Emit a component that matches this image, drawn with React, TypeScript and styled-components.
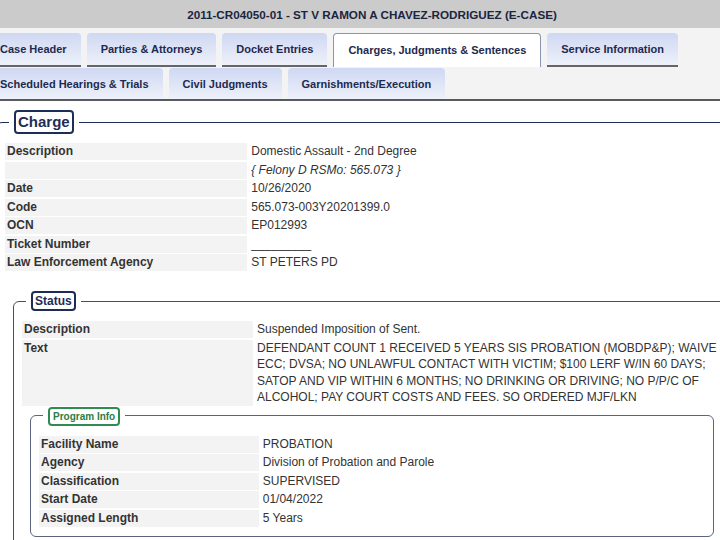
import React from "react";
import styled, { createGlobalStyle } from "styled-components";

const Global = createGlobalStyle`
  html, body { margin: 0; padding: 0; background: #ffffff; overflow: hidden; }
  body { font-family: "Liberation Sans", Arial, Helvetica, sans-serif; }
`;

const Page = styled.div`
  width: 772px;
  margin-left: -14px;
`;

const TitleBar = styled.div`
  height: 28px;
  background: #cbcbcb;
  display: flex;
  align-items: center;
  justify-content: center;
  font-weight: bold;
  font-size: 11.7px;
  color: #1c2540;
`;

const TabArea = styled.div`
  background: #f3f3f3;
  padding-top: 5px;
  border-bottom: 2px solid #5a5a5a;
  display: flex;
  flex-direction: column;
  gap: 1px;
`;

const TabRow = styled.div`
  display: flex;
  gap: 6px;
  align-items: flex-end;
`;

const Tab = styled.div<{ $active?: boolean; $row: number }>`
  box-sizing: border-box;
  height: ${(p) => (p.$row === 1 ? 34 : 31)}px;
  padding: 0 ${(p) => (p.$active ? 14 : 14)}px ${(p) => (p.$active ? 2 : 0)}px;
  display: flex;
  align-items: center;
  white-space: nowrap;
  font-size: 11px;
  font-weight: bold;
  color: #1d2a4e;
  border-radius: 4px 4px 0 0;
  background: ${(p) => (p.$active ? "#ffffff" : "linear-gradient(#cfd8f3, #eef1fa)")};
  border: ${(p) => (p.$active ? "1px solid #8796ae" : "none")};
  border-bottom: ${(p) => (p.$active ? "none" : p.$row === 1 ? "2px solid #666666" : "none")};
`;

const Content = styled.div`
  background: #ffffff;
  padding-bottom: 20px;
`;

const Fieldset = styled.fieldset<{ $level: number }>`
  min-width: 0;
  margin: ${(p) => (p.$level === 0 ? "9px 10px 0" : p.$level === 1 ? "20px 8px 0" : "0 8px 0")};
  padding: ${(p) => (p.$level === 0 ? "9px 8px 10px" : p.$level === 1 ? "10px 8px 10px" : "10px 8px 9px")};
  border: 1px solid ${(p) => (p.$level === 0 ? "#1e2d55" : p.$level === 1 ? "#434f70" : "#5a6480")};
  border-radius: 6px;
`;

const Legend = styled.legend`
  margin-left: 4px;
  padding: 0 5px;
`;

const LegendBox = styled.span<{ $kind: "main" | "sub" | "green" }>`
  display: inline-block;
  font-weight: bold;
  border-radius: 4px;
  border: 2px solid ${(p) => (p.$kind === "green" ? "#2f8c50" : "#1e2d55")};
  color: ${(p) => (p.$kind === "green" ? "#2b7d46" : "#1e2d55")};
  font-size: ${(p) => (p.$kind === "main" ? 15 : p.$kind === "sub" ? 12 : 10)}px;
  line-height: ${(p) => (p.$kind === "main" ? 20 : p.$kind === "sub" ? 16 : 15)}px;
  padding: 0 ${(p) => (p.$kind === "green" ? 3 : 2)}px;
`;

const InfoGrid = styled.div`
  display: grid;
  grid-template-columns: 33% 1fr;
  column-gap: 2px;
  row-gap: 1.5px;
  font-size: 12px;
  line-height: 17px;
  color: #333333;
`;

const Label = styled.div`
  background: #f3f3f3;
  font-weight: bold;
  padding: 0 2px;
  white-space: nowrap;
`;

const Value = styled.div<{ $italic?: boolean }>`
  padding: 0 2px;
  font-style: ${(p) => (p.$italic ? "italic" : "normal")};
`;

const Line = styled.span`
  display: block;
  white-space: nowrap;
  line-height: 16.6px;
`;

type Row = [string, React.ReactNode, boolean?];

const Rows = ({ rows }: { rows: Row[] }) => (
  <InfoGrid>
    {rows.map(([l, v, it], i) => (
      <React.Fragment key={i}>
        <Label>{l}</Label>
        <Value $italic={it}>{v}</Value>
      </React.Fragment>
    ))}
  </InfoGrid>
);

const statusText = [
  "DEFENDANT COUNT 1 RECEIVED 5 YEARS SIS PROBATION (MOBDP&P); WAIVE",
  "ECC; DVSA; NO UNLAWFUL CONTACT WITH VICTIM; $100 LERF W/IN 60 DAYS;",
  "SATOP AND VIP WITHIN 6 MONTHS; NO DRINKING OR DRIVING; NO P/P/C OF",
  "ALCOHOL; PAY COURT COSTS AND FEES. SO ORDERED MJF/LKN",
];

export default function App() {
  return (
    <Page>
      <Global />
      <TitleBar>2011-CR04050-01 - ST V RAMON A CHAVEZ-RODRIGUEZ (E-CASE)</TitleBar>
      <TabArea>
        <TabRow>
          <Tab $row={1}>Case Header</Tab>
          <Tab $row={1}>Parties &amp; Attorneys</Tab>
          <Tab $row={1}>Docket Entries</Tab>
          <Tab $row={1} $active>Charges, Judgments &amp; Sentences</Tab>
          <Tab $row={1}>Service Information</Tab>
        </TabRow>
        <TabRow>
          <Tab $row={2}>Scheduled Hearings &amp; Trials</Tab>
          <Tab $row={2}>Civil Judgments</Tab>
          <Tab $row={2}>Garnishments/Execution</Tab>
        </TabRow>
      </TabArea>
      <Content>
        <Fieldset $level={0}>
          <Legend>
            <LegendBox $kind="main">Charge</LegendBox>
          </Legend>
          <Rows
            rows={[
              ["Description", "Domestic Assault - 2nd Degree"],
              ["", "{ Felony D RSMo: 565.073 }", true],
              ["Date", "10/26/2020"],
              ["Code", "565.073-003Y20201399.0"],
              ["OCN", "EP012993"],
              ["Ticket Number", "_________"],
              ["Law Enforcement Agency", "ST PETERS PD"],
            ]}
          />
          <Fieldset $level={1}>
            <Legend>
              <LegendBox $kind="sub">Status</LegendBox>
            </Legend>
            <Rows
              rows={[
                ["Description", "Suspended Imposition of Sent."],
                [
                  "Text",
                  <>
                    {statusText.map((t, i) => (
                      <Line key={i}>{t}</Line>
                    ))}
                  </>,
                ],
              ]}
            />
            <Fieldset $level={2}>
              <Legend>
                <LegendBox $kind="green">Program Info</LegendBox>
              </Legend>
              <Rows
                rows={[
                  ["Facility Name", "PROBATION"],
                  ["Agency", "Division of Probation and Parole"],
                  ["Classification", "SUPERVISED"],
                  ["Start Date", "01/04/2022"],
                  ["Assigned Length", "5 Years"],
                ]}
              />
            </Fieldset>
          </Fieldset>
        </Fieldset>
      </Content>
    </Page>
  );
}
